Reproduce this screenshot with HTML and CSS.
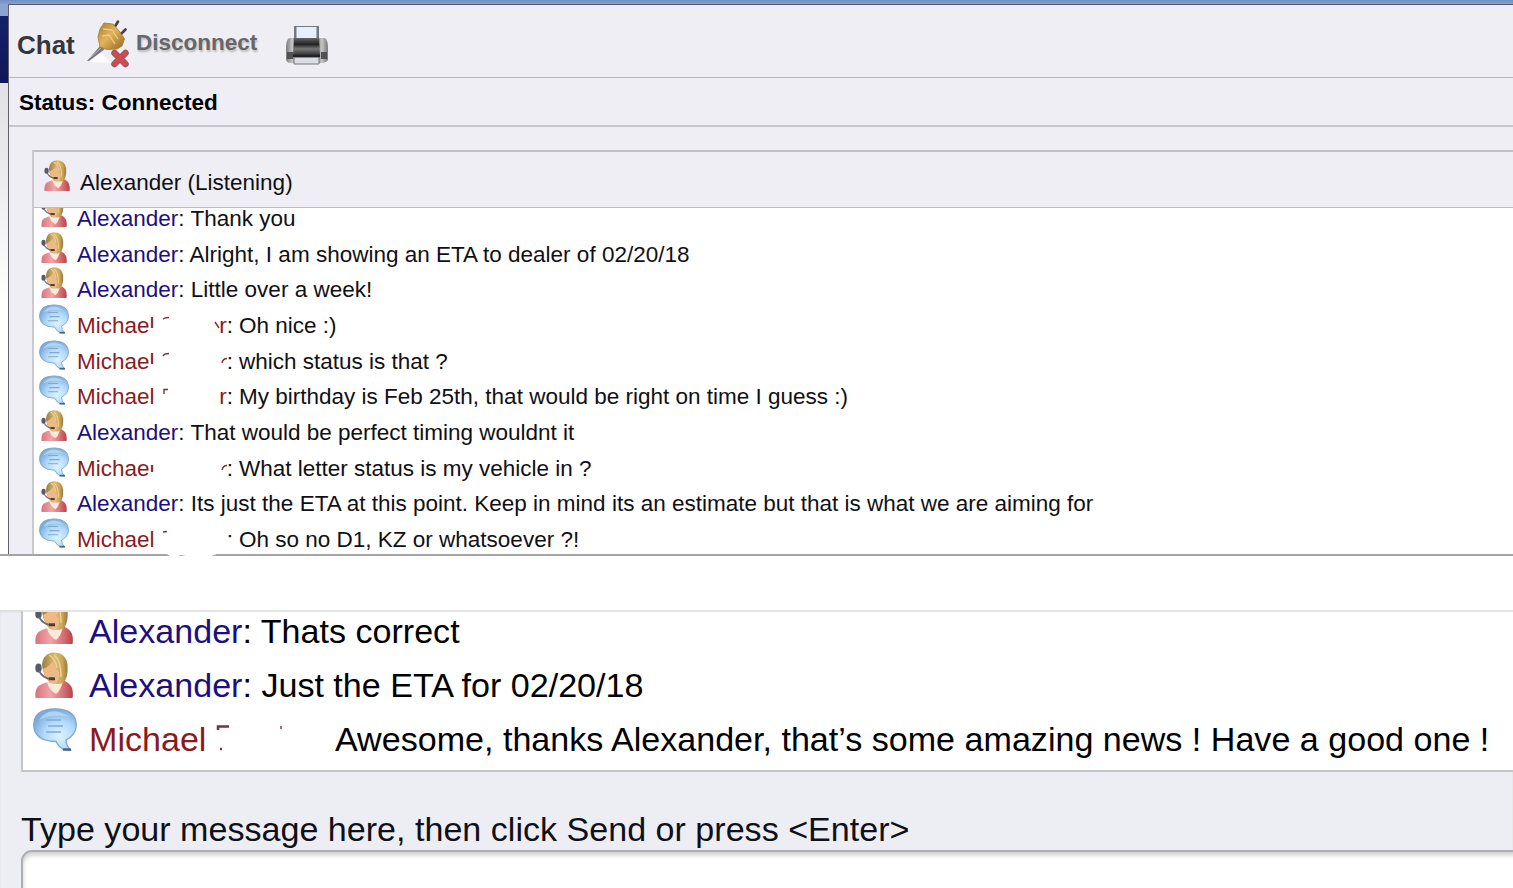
FILE: index.html
```
<!DOCTYPE html>
<html lang="en">

<head>
    <meta charset="UTF-8">
    <meta name="viewport" content="width=device-width, initial-scale=1.0">
    <title>Chat</title>
    <link rel="stylesheet" href="styles.css">
</head>

<body>
    <svg class="sprite" width="0" height="0">
        <defs>
            <linearGradient id="hair" x1="0" y1="0" x2="1" y2="0">
                <stop offset="0" stop-color="#97803f" />
                <stop offset="0.5" stop-color="#dcbb72" />
                <stop offset="0.8" stop-color="#c9a458" />
                <stop offset="1" stop-color="#96783a" />
            </linearGradient>
            <linearGradient id="shirt" x1="0" y1="0" x2="1" y2="0">
                <stop offset="0" stop-color="#d9737c" />
                <stop offset="0.4" stop-color="#f0a5a8" />
                <stop offset="0.7" stop-color="#d9787c" />
                <stop offset="1" stop-color="#b84349" />
            </linearGradient>
            <radialGradient id="bubbleFill" cx="0.6" cy="0.65" r="0.65">
                <stop offset="0" stop-color="#dcf3ff" />
                <stop offset="0.55" stop-color="#b2dafa" />
                <stop offset="1" stop-color="#79abdc" />
            </radialGradient>
            <linearGradient id="brass" x1="0" y1="0" x2="1" y2="1">
                <stop offset="0" stop-color="#a87a2e" />
                <stop offset="0.45" stop-color="#e3b45c" />
                <stop offset="1" stop-color="#94631d" />
            </linearGradient>
            <linearGradient id="metal" x1="0" y1="0" x2="1" y2="0">
                <stop offset="0" stop-color="#777" />
                <stop offset="0.15" stop-color="#c8c8ca" />
                <stop offset="0.3" stop-color="#555" />
                <stop offset="0.7" stop-color="#555" />
                <stop offset="0.85" stop-color="#c8c8ca" />
                <stop offset="1" stop-color="#777" />
            </linearGradient>
            <linearGradient id="roller" x1="0" y1="0" x2="0" y2="1">
                <stop offset="0" stop-color="#666" />
                <stop offset="0.35" stop-color="#222" />
                <stop offset="0.6" stop-color="#777" />
                <stop offset="1" stop-color="#292929" />
            </linearGradient>
        </defs>
        <symbol id="agent" viewBox="0 0 38 46">
            <path d="M0.500 46Q-0.500 36 5 33Q9 31 13 30L28 28Q35 31 37 36Q38.500 41 37.500 46Z" fill="url(#shirt)" />
            <path d="M12 30L28 29Q26 38 21 42Q14 38 12 30Z" fill="#fbe9dc" />
            <path d="M7 13Q8 1 19 0.500Q31 0.500 32.500 13Q33.500 26 28 31Q23 33 15 31Q8 24 7 13Z" fill="url(#hair)" />
            <path d="M8 17Q15 14 18 9Q20 17 24 20Q25 29 19 32Q10 29 8 17Z" fill="#edb987" />
            <path d="M19 3Q26 8 26 25M14 3Q20 6 22 16" fill="none" stroke="#ecd08f" stroke-width="1.500" />
            <ellipse cx="3.500" cy="16" rx="3.200" ry="4.500" fill="#565a6b" />
            <path d="M4 19Q8 26 15 27" fill="none" stroke="#6f6b70" stroke-width="1.800" />
            <path d="M14 26.800H20" stroke="#4a3c37" stroke-width="3" />
        </symbol>
        <symbol id="bubble" viewBox="0 0 44 43">
            <path d="M22 0.800Q43 1 43.300 17Q43 27 33 32Q33 37 37.500 42.300L32 42Q26 40 23 33.500Q1 33 0.700 17Q1 1 22 0.800Z" fill="url(#bubbleFill)" stroke="#7fa6c9" stroke-width="1.300" />
            <path d="M6 12Q16 -4 37 9Q20 5 6 12Z" fill="#d8ecfa" opacity="0.500" />
            <path d="M13 12H28M15 18H30M13 24H28" stroke="#83a9d3" stroke-width="1.500" />
            <path d="M30 41.500H38" stroke="#48657f" stroke-width="2.400" />
        </symbol>
    </svg>

    <div class="window">
        <div class="edge"></div>
        <div class="frame">
            <div class="toolbar">
                <h1 class="title">Chat</h1>
                <svg class="plug" viewBox="0 0 44 48">
                    <path d="M2 42L24 43L14 33Z" fill="#fff" opacity="0.800" />
                    <path d="M0 41L13 26L18 29L2 41Z" fill="#77777c" />
                    <path d="M3 38L15 27" stroke="#b8b8bc" stroke-width="1" />
                    <path d="M27 8L31 1.500M33 15L38.500 9.500" stroke="#4a403c" stroke-width="2.600" stroke-linecap="round" />
                    <path d="M11 17L13 9L17 3L26 4L33 12L37.500 19L35 26L30 29L20 29.500L13 27Z" fill="url(#brass)" stroke="#a77a32" stroke-width="0.800" />
                    <path d="M16 9L25 10L31 19M15 16L22 15L28 24" fill="none" stroke="#eecb80" stroke-width="1.300" />
                    <path d="M27.500 33L38.500 44M38.500 33L27.500 44" stroke="#8f5a5e" stroke-width="6.500" stroke-linecap="round" />
                    <path d="M27.500 33L38.500 44M38.500 33L27.500 44" stroke="#d24a50" stroke-width="4.200" stroke-linecap="round" />
                </svg>
                <span class="disconnect">Disconnect</span>
                <svg class="printer" viewBox="0 0 42 42">
                    <path d="M8 1H33V16H8Z" fill="#77787e" />
                    <path d="M10.500 2H30.500V14H10.500Z" fill="#e8effa" />
                    <path d="M3 13H39Q42 15 42 24V35Q41 37 37 38H4Q0 37 0 34V24Q0 15 3 13Z" fill="url(#metal)" />
                    <path d="M8 13H33L34 31H7Z" fill="url(#roller)" />
                    <path d="M1 27H7V34H1ZM35 27H41V34H35Z" fill="#515154" />
                    <path d="M8 32H33V39H8Z" fill="#dcdde2" stroke="#777" stroke-width="1" />
                    <path d="M7 31H34" stroke="#222" stroke-width="2.400" />
                </svg>
            </div>
            <div class="status">Status: Connected</div>
            <div class="chat">
                <div class="listening">
                    <svg class="agent"><use href="#agent" /></svg>
                    <span>Alexander (Listening)</span>
                </div>
                <div class="messages">
                    <div class="row"><svg class="agent"><use href="#agent" /></svg><p><b>Alexander</b>: Thank you</p></div>
                    <div class="row"><svg class="agent"><use href="#agent" /></svg><p><b>Alexander</b>: Alright, I am showing an ETA to dealer of 02/20/18</p></div>
                    <div class="row"><svg class="agent"><use href="#agent" /></svg><p><b>Alexander</b>: Little over a week!</p></div>
                    <div class="row">
                        <svg class="bubble"><use href="#bubble" /></svg>
                        <div class="name"><b>Michael</b><span><b>r</b>:</span>
                            <svg viewBox="0 0 163 36"><path class="wipe" d="M72 20H80V28H72Z" /><path d="M86 11Q88 9.500 92 9.500M138 14L142 20" /></svg>
                        </div>
                        <p>Oh nice :)</p>
                    </div>
                    <div class="row">
                        <svg class="bubble"><use href="#bubble" /></svg>
                        <div class="name"><b>Michael</b><span>:</span>
                            <svg viewBox="0 0 163 36"><path class="wipe" d="M72 20H80V28H72Z" /><path d="M86 12Q87 9.500 92 9.500M145 19Q146 14.500 150 14.500" /></svg>
                        </div>
                        <p>which status is that ?</p>
                    </div>
                    <div class="row">
                        <svg class="bubble"><use href="#bubble" /></svg>
                        <div class="name"><b>Michael</b><span><b>r</b>:</span>
                            <svg viewBox="0 0 163 36"><path d="M87 15V10.500H91" /></svg>
                        </div>
                        <p>My birthday is Feb 25th, that would be right on time I guess :)</p>
                    </div>
                    <div class="row"><svg class="agent"><use href="#agent" /></svg><p><b>Alexander</b>: That would be perfect timing wouldnt it</p></div>
                    <div class="row">
                        <svg class="bubble"><use href="#bubble" /></svg>
                        <div class="name"><b>Michael</b><span>:</span>
                            <svg viewBox="0 0 163 36"><path class="wipe" d="M72.500 6H80V14H72.500ZM72.500 21H80V28H72.500Z" /><path d="M145 19Q146 14.500 150 14.500" /></svg>
                        </div>
                        <p>What letter status is my vehicle in ?</p>
                    </div>
                    <div class="row"><svg class="agent"><use href="#agent" /></svg><p><b>Alexander</b>: Its just the ETA at this point. Keep in mind its an estimate but that is what we are aiming for</p></div>
                    <div class="row">
                        <svg class="bubble"><use href="#bubble" /></svg>
                        <div class="name"><b>Michael</b><span>:</span>
                            <svg viewBox="0 0 163 36"><path class="wipe" d="M148 19H160V28H148Z" /><path d="M86 10L90 9.500" /></svg>
                        </div>
                        <p>Oh so no D1, KZ or whatsoever ?!</p>
                    </div>
                </div>
            </div>
        </div>
    </div>

    <div class="divider">
        <svg viewBox="0 0 50 4"><path d="M0 0H50L44 2L24 3L14 1L8 3Q3 3 0 0Z" fill="#fff" /></svg>
    </div>

    <div class="compose">
        <div class="messages large">
            <div class="row"><svg class="agent"><use href="#agent" /></svg><p><b>Alexander</b>: Thats correct</p></div>
            <div class="row"><svg class="agent"><use href="#agent" /></svg><p><b>Alexander</b>: Just the ETA for 02/20/18</p></div>
            <div class="row">
                <svg class="bubble"><use href="#bubble" /></svg>
                <div class="name"><b>Michael</b>
                    <svg viewBox="0 0 246 54"><path d="M129 18V14.500H140M131 37H133" stroke-width="2.500" /><path d="M192 14V17" /></svg>
                </div>
                <p>Awesome, thanks Alexander, that’s some amazing news ! Have a good one !</p>
            </div>
        </div>
        <label class="prompt" for="message">Type your message here, then click Send or press &lt;Enter&gt;</label>
        <input type="text" id="message" class="message-input">
    </div>
</body>

</html>
```

FILE: styles.css
```
* {
    box-sizing: border-box;
}

body {
    margin: 0;
    height: 888px;
    overflow: hidden;
    background: #fff;
    color: #101014;
    font-family: "Liberation Sans", Arial, sans-serif;
    font-size: 22.5px;
}

p {
    margin: 0;
}

.sprite {
    display: block;
}

.window {
    display: flex;
    height: 554px;
    overflow: hidden;
    padding-top: 4px;
    background: linear-gradient(#7090c4, #86a0ca 4px, #fff 4px);
}

.edge {
    width: 8px;
    background: linear-gradient(#8ba5d0 12px, #15206a 12px, #101758 79px, #e2e2e6 79px, #ececf0 180px, #fff 300px);
}

.frame {
    flex: 1;
    border-top: 1px solid #4f5974;
    border-left: 1px solid #606068;
    background: #eeeef4;
}

.toolbar {
    display: flex;
    align-items: flex-start;
    height: 73px;
    padding-left: 8px;
    border-bottom: 1px solid #b5b5bc;
}

.title {
    width: 70px;
    margin: 25px 0 0;
    color: #36363e;
    font-size: 26px;
    line-height: 30px;
}

.plug {
    width: 44px;
    height: 48px;
    margin-top: 15px;
}

.disconnect {
    width: 150px;
    margin: 23px 0 0 5px;
    color: #66666b;
    font-weight: bold;
    line-height: 30px;
    text-shadow: 1px 2px 2px #bbb;
}

.printer {
    width: 42px;
    height: 42px;
    margin-top: 20px;
}

.status {
    height: 49px;
    padding-left: 10px;
    border-bottom: 2px solid #c6c6cc;
    color: #000;
    font-weight: bold;
    line-height: 49px;
}

.chat {
    margin: 23px 0 0 23px;
    border-top: 2px solid #c0c0c6;
    border-left: 2px solid #c9c9cf;
}

.listening {
    display: flex;
    height: 56px;
    padding-left: 10px;
    border-bottom: 1px solid #bebec4;
    line-height: 62px;
}

.listening .agent {
    width: 26px;
    height: 31px;
    margin: 8px 10px 0 0;
}

.messages {
    height: 347px;
    overflow: hidden;
    background: #fff;
}

.row {
    display: flex;
    height: 35.67px;
    line-height: 35px;
    white-space: nowrap;
}

.row:first-child {
    margin-top: -7px;
}

.row b {
    color: #8b1a20;
    font-weight: normal;
}

.row p b {
    color: #1c0f80;
}

.row .agent {
    flex: none;
    width: 26px;
    height: 31px;
    margin: -5px 10px 0 7px;
}

.row .bubble {
    flex: none;
    width: 30px;
    height: 30px;
    margin: -4px 8px 0 5px;
}

.name {
    position: relative;
    display: flex;
    flex: none;
    justify-content: space-between;
    width: 162px;
    padding-right: 6px;
}

.name svg {
    position: absolute;
    top: 0;
    left: 0;
    width: 163px;
    height: 36px;
    fill: none;
    stroke: #7a3035;
    stroke-width: 1.4;
}

.name .wipe {
    fill: #fff;
    stroke: none;
}

.divider {
    height: 56px;
    padding-left: 167px;
    border-top: 2px solid #a4a4a6;
}

/* rubbed out part of the line */
.divider svg {
    position: relative;
    top: -2px;
    display: block;
    width: 50px;
    height: 4px;
}

.compose {
    height: 278px;
    padding-left: 21px;
    background: #edeef3;
    box-shadow: inset 0 2px 2px #ddd;
}

.large {
    height: 162px;
    border-top: 2px solid #e6e6e6;
    border-bottom: 2px solid #c4c4c9;
    border-left: 2px solid #c4c4c9;
    color: #000;
    font-size: 34.1px;
}

.large .row {
    height: 54px;
    line-height: 55px;
}

.large .row:first-child {
    margin-top: -8px;
}

.large .agent {
    width: 38px;
    height: 46px;
    margin: -6px 16px 0 12px;
}

.large .bubble {
    width: 44px;
    height: 43px;
    margin: -4px 12px 0 10px;
}

.large .name {
    width: 246px;
}

.large .name svg {
    width: 246px;
    height: 54px;
}

.prompt {
    display: block;
    height: 78px;
    color: #101018;
    font-size: 34.1px;
    line-height: 114px;
}

.message-input {
    position: relative;
    display: block;
    width: 1510px;
    height: 70px;
    border: 2px solid #adadb3;
    border-radius: 11px;
    background: #fff;
    box-shadow: inset 0 3px 5px #ccc;
}
```
